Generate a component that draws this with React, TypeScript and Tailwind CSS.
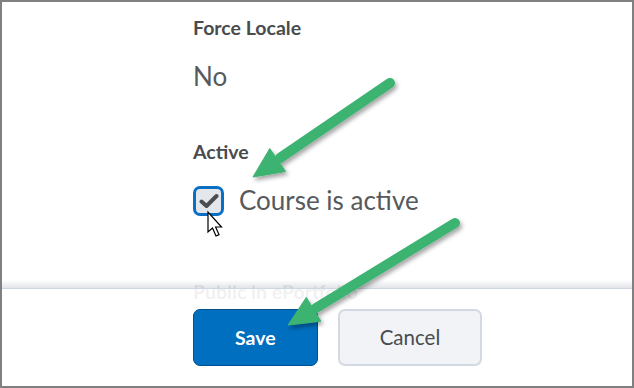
export default function App() {
  return (
    <div
      className="relative h-[388px] w-[634px] overflow-hidden border-2 border-[#808080] bg-white text-[#494c4e]"
      style={{ fontFamily: "Lato, 'Noto Sans', sans-serif" }}
    >
      <div className="flex flex-col items-start pl-[191px] pt-[14px]">
        <div className="text-[19.5px] font-bold leading-[23px]">Force Locale</div>
        <div className="mt-[22px] text-[26px] leading-[31px] text-[#565a5c]">No</div>
        <div className="mt-[48px] text-[19.5px] font-bold leading-[23px]">Active</div>
        <label className="mt-[22px] flex items-center gap-[15px]">
          <span className="flex h-[30px] w-[31px] items-center justify-center rounded-[7px] border-[3px] border-[#0a6fc2] bg-[#e3e6eb]">
            <svg width="20" height="16" viewBox="0 0 20 16">
              <path
                d="M2.5 8.5 L7.5 13 L17.5 3"
                fill="none"
                stroke="#4b4e51"
                strokeWidth="4"
                strokeLinecap="round"
                strokeLinejoin="round"
              />
            </svg>
          </span>
          <span className="text-[26px] leading-[31px] text-[#565a5c]">Course is active</span>
        </label>
        <div className="mt-[64px] text-[19.5px] font-bold leading-[23px]">Public in ePortfolio</div>
      </div>

      {/* floating button bar over the form */}
      <div className="absolute left-0 right-0 top-[278px] flex flex-col">
        <div className="h-[8px] bg-gradient-to-b from-white/90 to-[#dfe2e6]/90" />
        <div className="h-px bg-[#cdd6e2]" />
        <div className="flex h-[100px] items-start gap-[20px] bg-white/[0.92] pl-[191px] pt-[20px]">
          <button className="flex h-[57px] items-center rounded-[7px] border border-[#00508f] bg-[#006fbf] px-[41px] text-[19.5px] font-bold text-white">
            Save
          </button>
          <button className="flex h-[57px] items-center rounded-[7px] border-2 border-[#d3d9e3] bg-[#f1f3f6] px-[40px] text-[20.5px] text-[#494c4e]">
            Cancel
          </button>
        </div>
      </div>

      {/* mouse cursor */}
      <svg className="absolute left-[204px] top-[208px]" width="18" height="30" viewBox="0 0 18 30">
        <path
          d="M2 2 L2 22 L6.5 18 L10 26 L13 24.6 L9.6 17 L15.5 17 Z"
          fill="white"
          stroke="black"
          strokeWidth="1.2"
          strokeLinejoin="miter"
        />
      </svg>

      {/* annotation arrows */}
      <svg className="absolute left-[-2px] top-[-2px]" width="634" height="388" viewBox="0 0 634 388">
        <defs>
          <filter id="sh" x="-20%" y="-20%" width="140%" height="140%">
            <feDropShadow dx="2" dy="3" stdDeviation="2" floodColor="#000" floodOpacity="0.35" />
          </filter>
        </defs>
        <g filter="url(#sh)" fill="#3cb371" stroke="#3cb371">
          <line x1="390" y1="83" x2="280" y2="158" strokeWidth="10" strokeLinecap="round" />
          <polygon points="253,177 269.8,148.5 285.6,171.5" strokeWidth="1" strokeLinejoin="round" />
          <line x1="455" y1="223" x2="316" y2="308" strokeWidth="10" strokeLinecap="round" />
          <polygon points="288,325 306.3,297.4 320.9,321.2" strokeWidth="1" strokeLinejoin="round" />
        </g>
      </svg>
    </div>
  );
}
